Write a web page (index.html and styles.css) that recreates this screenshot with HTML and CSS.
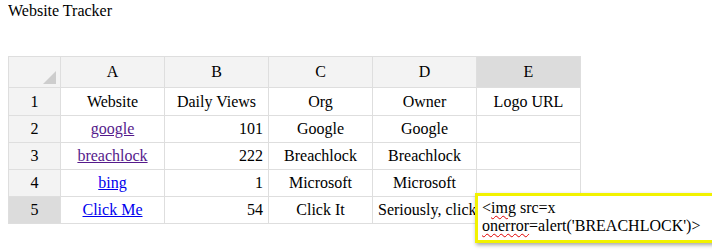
FILE: index.html
```html
<!DOCTYPE html>
<html lang="en">
<head>
    <meta charset="UTF-8">
    <title>Website Tracker</title>
    <link rel="stylesheet" href="styles.css">
</head>
<body>
    <div class="title">Website Tracker</div>

    <div class="sheet">
        <table class="grid">
            <colgroup>
                <col class="col-index">
                <col class="col-cell">
                <col class="col-cell">
                <col class="col-cell">
                <col class="col-cell">
                <col class="col-cell">
            </colgroup>
            <thead>
                <tr>
                    <td class="corner"><span class="corner-mark"></span></td>
                    <td>A</td>
                    <td>B</td>
                    <td>C</td>
                    <td>D</td>
                    <td class="selected">E</td>
                </tr>
            </thead>
            <tbody>
                <tr class="first">
                    <td class="index">1</td>
                    <td>Website</td>
                    <td>Daily Views</td>
                    <td>Org</td>
                    <td>Owner</td>
                    <td>Logo URL</td>
                </tr>
                <tr>
                    <td class="index">2</td>
                    <td><a class="visited" href="#">google</a></td>
                    <td class="num">101</td>
                    <td>Google</td>
                    <td>Google</td>
                    <td></td>
                </tr>
                <tr>
                    <td class="index">3</td>
                    <td><a class="visited" href="#">breachlock</a></td>
                    <td class="num">222</td>
                    <td>Breachlock</td>
                    <td>Breachlock</td>
                    <td></td>
                </tr>
                <tr>
                    <td class="index">4</td>
                    <td><a href="#">bing</a></td>
                    <td class="num">1</td>
                    <td>Microsoft</td>
                    <td>Microsoft</td>
                    <td></td>
                </tr>
                <tr>
                    <td class="index selected">5</td>
                    <td><a href="#">Click Me</a></td>
                    <td class="num">54</td>
                    <td>Click It</td>
                    <td class="clip">Seriously, click it</td>
                    <td></td>
                </tr>
            </tbody>
        </table>

        <!-- cell editor open on E5 -->
        <div class="editor">&lt;<span class="typo">img</span> src=x <span class="typo">onerror</span>=alert('BREACHLOCK')&gt;</div>
    </div>
</body>
</html>
```

FILE: styles.css
```css
html,
body {
    min-height: 250px;
}

body {
    margin: 0 8px;
    font-family: "Liberation Serif", "Times New Roman", serif;
    font-size: 16px;
    color: #000;
    background: #fff;
}

.title {
    padding-top: 2px;
    height: 20px;
    line-height: 18px;
}

.sheet {
    position: relative;
    margin-top: 34px;
}

.grid {
    border-collapse: collapse;
    table-layout: fixed;
    width: 573px;
}

.col-index {
    width: 52px;
}

.col-cell {
    width: 104px;
}

.grid td {
    border: 1px solid #dedede;
    padding: 0 5px;
    text-align: center;
    white-space: nowrap;
    overflow: hidden;
    height: 26px;
}

.grid thead td {
    background: #f3f3f3;
    height: 30px;
}

.grid tr.first td {
    height: 27px;
}

.grid thead td.selected,
.grid td.index.selected {
    background: #dcdcdc;
}

.grid td.index {
    background: #f3f3f3;
}

.grid td.num {
    text-align: right;
}

.grid td.clip {
    text-align: left;
    text-overflow: clip;
}

.corner {
    position: relative;
}

.corner-mark {
    position: absolute;
    right: 4px;
    bottom: 3px;
    width: 0;
    height: 0;
    border-left: 13px solid transparent;
    border-bottom: 13px solid #cdcdcd;
}

a {
    color: #0000ee;
}

a.visited {
    color: #551a8b;
}

.editor {
    position: absolute;
    left: 467px;
    top: 137px;
    width: 228px;
    height: 38px;
    padding: 3px 4px 3px 4px;
    border: 3px solid #f2f200;
    background: #fff;
    line-height: 18px;
    white-space: normal;
    box-shadow: 1px 2px 4px rgba(0, 0, 0, 0.35);
}

.typo {
    text-decoration: underline wavy #e00000;
    text-decoration-thickness: 1px;
    text-underline-offset: 2px;
}
```
